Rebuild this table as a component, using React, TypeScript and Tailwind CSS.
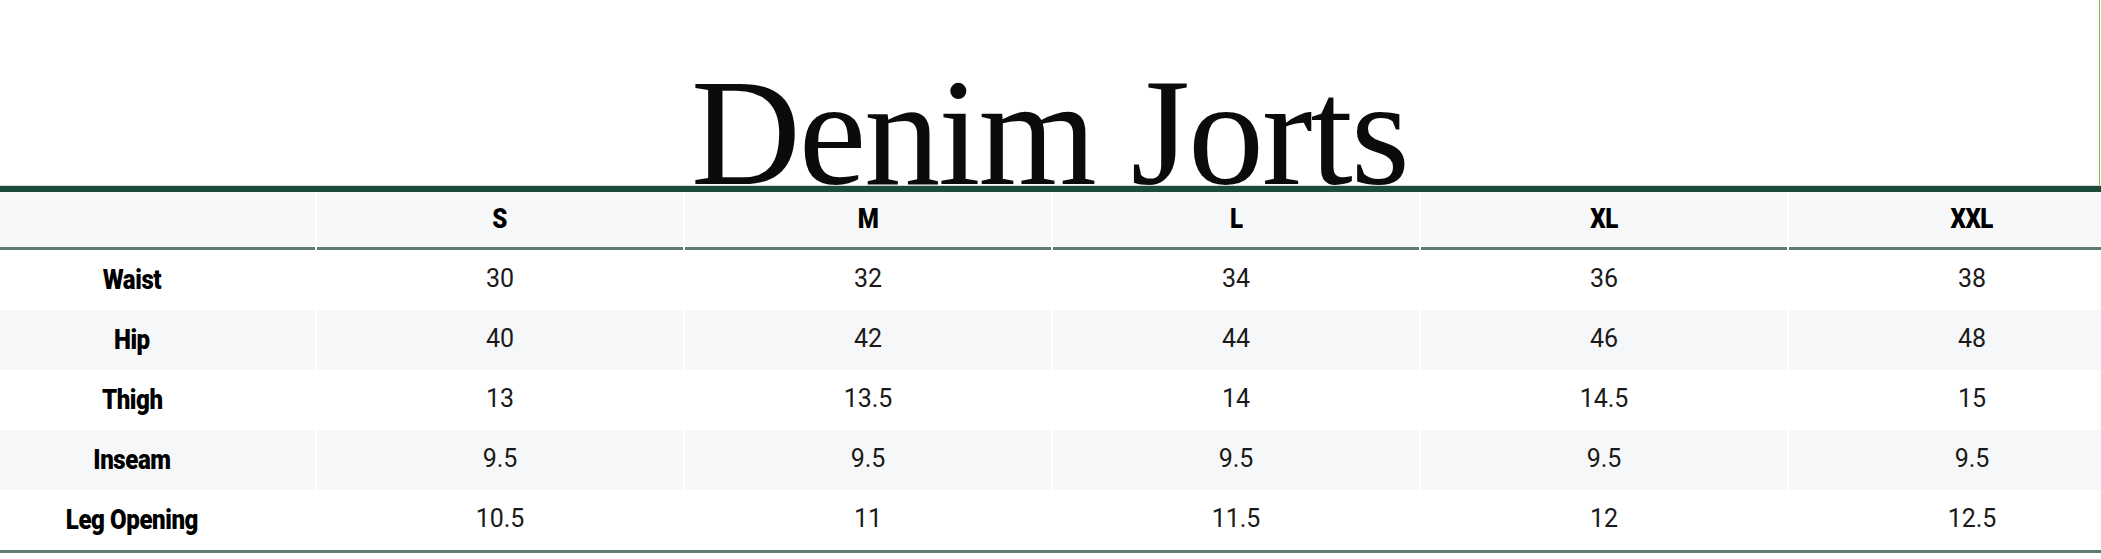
const sizes = ["S", "M", "L", "XL", "XXL"];

const rows = [
  { label: "Waist", values: ["30", "32", "34", "36", "38"] },
  { label: "Hip", values: ["40", "42", "44", "46", "48"] },
  { label: "Thigh", values: ["13", "13.5", "14", "14.5", "15"] },
  { label: "Inseam", values: ["9.5", "9.5", "9.5", "9.5", "9.5"] },
  { label: "Leg Opening", values: ["10.5", "11", "11.5", "12", "12.5"] },
];

function Label({ children }: { children: React.ReactNode }) {
  return (
    <span className="inline-block scale-x-[0.86] font-['Roboto',sans-serif] text-[28px] font-black leading-none tracking-[-0.5px] text-black">
      {children}
    </span>
  );
}

export default function App() {
  return (
    <div className="h-[559px] w-[2101px] overflow-hidden bg-white">
      {/* title */}
      <div className="relative z-10 h-[185px] w-[2100px] border-r border-[#7bc043] pt-[73px] text-center font-['Liberation_Serif',serif] text-[152px] leading-[0.8] tracking-[-2px] text-[#0a0c0a]">
        Denim Jorts
      </div>
      <div className="h-px bg-[#d2d9d5]" />
      <div className="h-[6px] bg-[#1e4a39]" />

      {/* size table */}
      <div className="ml-[-51px] w-[2206px]">
        <div className="grid grid-cols-6 gap-x-[2px]">
          <div className="border-b-[3px] border-[#5e7d6f] pb-px">
            <div className="h-[54px] bg-[#f6f8f9]" />
          </div>
          {sizes.map((s) => (
            <div key={s} className="border-b-[3px] border-[#5e7d6f] pb-px">
              <div className="flex h-[54px] items-center justify-center bg-[#f6f8f9]">
                <Label>{s}</Label>
              </div>
            </div>
          ))}
        </div>

        {rows.map((row, i) => (
          <div key={row.label} className="grid grid-cols-6 gap-x-[2px]">
            <div className={`flex h-[60px] items-center justify-center ${i % 2 === 1 ? "bg-[#f6f7f9]" : "bg-white"}`}>
              <Label>{row.label}</Label>
            </div>
            {row.values.map((v, j) => (
              <div
                key={j}
                className={`flex h-[60px] items-center justify-center pb-[3px] font-['Roboto',sans-serif] text-[25px] text-[#1a1a1a] ${i % 2 === 1 ? "bg-[#f6f7f9]" : "bg-white"}`}
              >
                {v}
              </div>
            ))}
          </div>
        ))}
        <div className="h-[3px] bg-[#5e7d6f]" />
      </div>
    </div>
  );
}
